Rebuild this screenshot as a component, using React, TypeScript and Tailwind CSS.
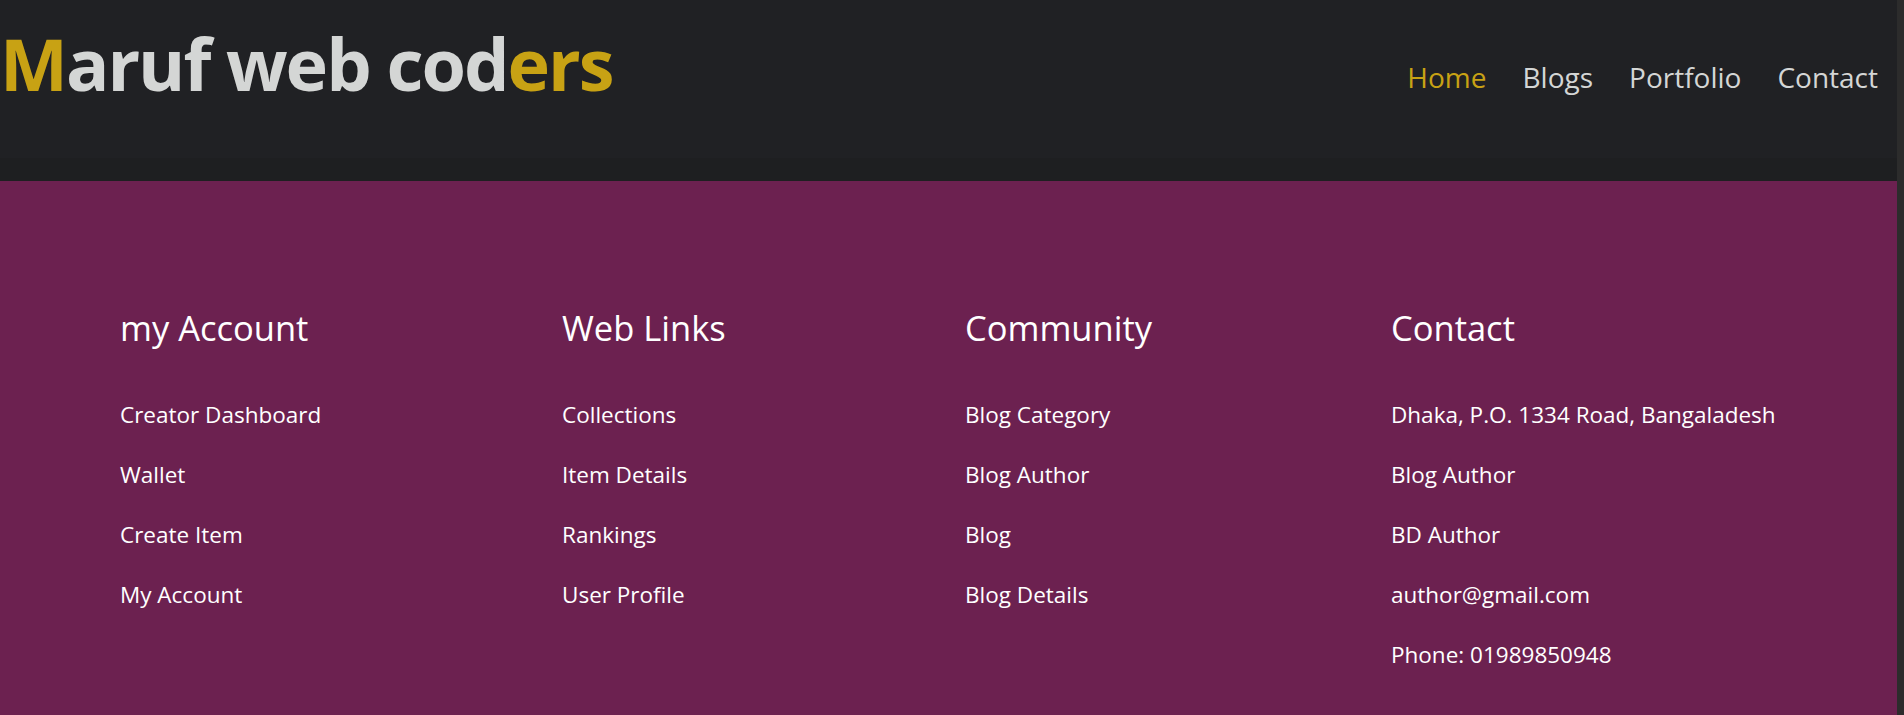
import React from 'react';

const columns = [
  { title: 'my Account', width: 'w-[442px]', links: ['Creator Dashboard', 'Wallet', 'Create Item', 'My Account'] },
  { title: 'Web Links', width: 'w-[403px]', links: ['Collections', 'Item Details', 'Rankings', 'User Profile'] },
  { title: 'Community', width: 'w-[426px]', links: ['Blog Category', 'Blog Author', 'Blog', 'Blog Details'] },
  {
    title: 'Contact',
    width: 'w-auto',
    links: ['Dhaka, P.O. 1334 Road, Bangaladesh', 'Blog Author', 'BD Author', 'author@gmail.com', 'Phone: 01989850948'],
  },
];

const navLinks = ['Home', 'Blogs', 'Portfolio', 'Contact'];

const App = () => {
  return (
    <div className="flex h-[715px] w-full overflow-hidden font-['Open_Sans',sans-serif]">
      <div className="flex flex-1 flex-col">
        {/* Header */}
        <header className="flex h-[181px] shrink-0 items-start justify-between bg-[#202124] pr-[19px] shadow-[inset_0_-23px_0_#1e1f21]">
          <h1 className="mt-[27px] text-[72px] font-bold leading-none tracking-[-2px] text-[#d4d6d5]">
            <span className="text-[#c8a214]">M</span>aruf web cod<span className="text-[#c8a214]">ers</span>
          </h1>
          <nav className="mt-[63px] flex gap-[36px] text-[28px] leading-none">
            {navLinks.map((link, index) => (
              <a key={link} href="#" className={index === 0 ? 'text-[#c8a214]' : 'text-[#d4d6d5]'}>
                {link}
              </a>
            ))}
          </nav>
        </header>

        {/* Footer */}
        <footer className="flex flex-1 bg-[#6c2150] pl-[120px] pt-[123px] text-white">
          {columns.map((col) => (
            <div key={col.title} className={`${col.width} shrink-0`}>
              <h3 className="text-[34.5px] leading-[48px]">{col.title}</h3>
              <ul className="mt-[45px] flex flex-col gap-[24px]">
                {col.links.map((link, index) => (
                  <li key={index} className="text-[22.5px] leading-[36px]">
                    {link}
                  </li>
                ))}
              </ul>
            </div>
          ))}
        </footer>
      </div>

      {/* Scrollbar strip */}
      <div className="w-[7px] shrink-0 bg-[#2c2c2c]" />
    </div>
  );
};

export default App;
